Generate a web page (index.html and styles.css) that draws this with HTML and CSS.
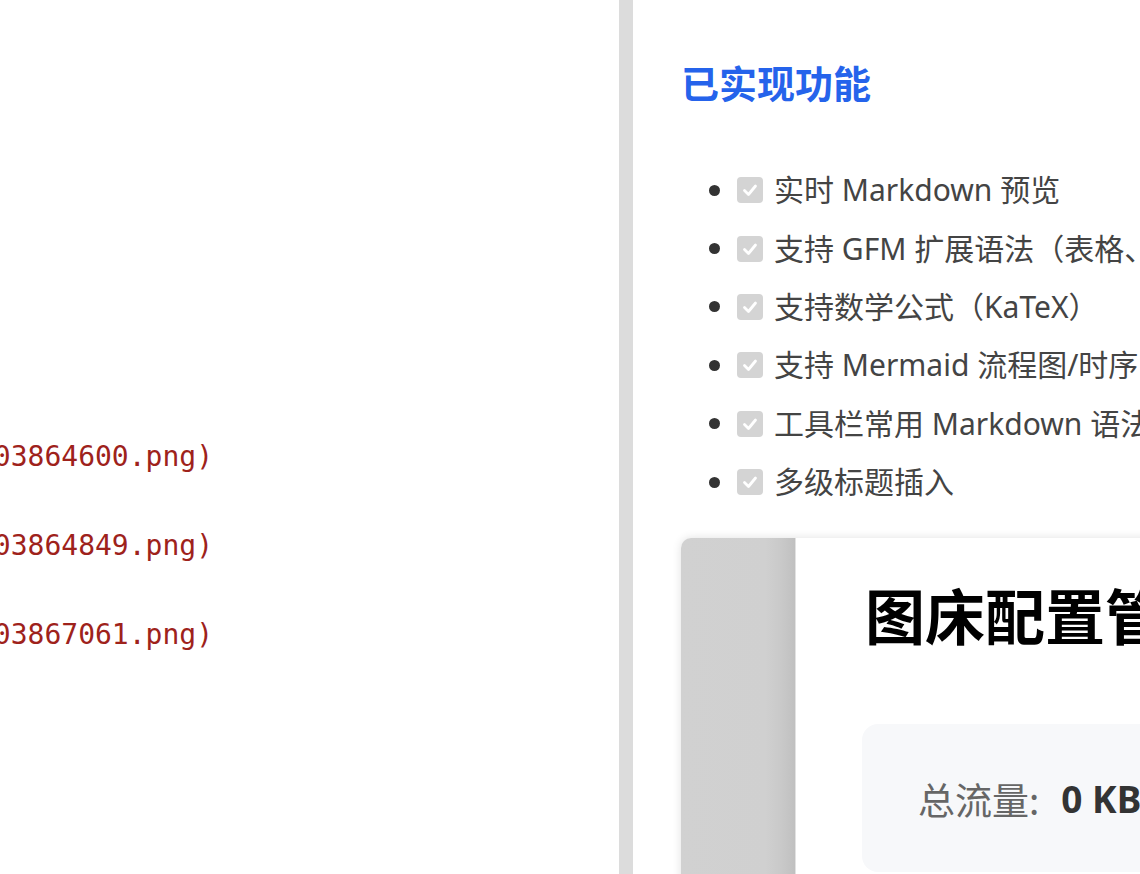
FILE: index.html
```html
<!DOCTYPE html>
<html lang="zh-CN">
<head>
<meta charset="utf-8">
<title>Markdown 编辑器</title>
<link rel="stylesheet" href="styles.css">
</head>
<body>
<div class="app">
  <div class="editor">
    <div class="code">
      <div class="code-line"><span>![image](https://img.example.com/upload/17038640003864600.png)</span></div>
      <div class="code-line"><span>![image](https://img.example.com/upload/17038640003864849.png)</span></div>
      <div class="code-line"><span>![image](https://img.example.com/upload/17038640003867061.png)</span></div>
    </div>
  </div>
  <div class="divider"></div>
  <div class="preview">
    <h2 class="title">已实现功能</h2>
    <ul class="tasks">
      <li class="task"><span class="dot"></span><span class="check"><svg viewBox="0 0 26 26" width="26" height="26"><path d="M7.5 13.5l4 4 7-8.5" fill="none" stroke="#fff" stroke-width="2.8" stroke-linecap="round" stroke-linejoin="round"/></svg></span><span class="label">实时 Markdown 预览</span></li>
      <li class="task"><span class="dot"></span><span class="check"><svg viewBox="0 0 26 26" width="26" height="26"><path d="M7.5 13.5l4 4 7-8.5" fill="none" stroke="#fff" stroke-width="2.8" stroke-linecap="round" stroke-linejoin="round"/></svg></span><span class="label">支持 GFM 扩展语法（表格、任务列表、删除线）</span></li>
      <li class="task"><span class="dot"></span><span class="check"><svg viewBox="0 0 26 26" width="26" height="26"><path d="M7.5 13.5l4 4 7-8.5" fill="none" stroke="#fff" stroke-width="2.8" stroke-linecap="round" stroke-linejoin="round"/></svg></span><span class="label">支持数学公式（KaTeX）</span></li>
      <li class="task"><span class="dot"></span><span class="check"><svg viewBox="0 0 26 26" width="26" height="26"><path d="M7.5 13.5l4 4 7-8.5" fill="none" stroke="#fff" stroke-width="2.8" stroke-linecap="round" stroke-linejoin="round"/></svg></span><span class="label">支持 Mermaid 流程图/时序图</span></li>
      <li class="task"><span class="dot"></span><span class="check"><svg viewBox="0 0 26 26" width="26" height="26"><path d="M7.5 13.5l4 4 7-8.5" fill="none" stroke="#fff" stroke-width="2.8" stroke-linecap="round" stroke-linejoin="round"/></svg></span><span class="label">工具栏常用 Markdown 语法</span></li>
      <li class="task"><span class="dot"></span><span class="check"><svg viewBox="0 0 26 26" width="26" height="26"><path d="M7.5 13.5l4 4 7-8.5" fill="none" stroke="#fff" stroke-width="2.8" stroke-linecap="round" stroke-linejoin="round"/></svg></span><span class="label">多级标题插入</span></li>
    </ul>
    <div class="shot">
      <div class="shot-side"></div>
      <div class="shot-main">
        <div class="shot-title">图床配置管理</div>
        <div class="shot-card"><span class="stat-label">总流量:</span><span class="stat-value">0 KB</span></div>
      </div>
    </div>
  </div>
</div>
</body>
</html>
```
FILE: styles.css
```css
html, body {
  margin: 0;
  padding: 0;
  background: #ffffff;
  overflow: hidden;
}

.app {
  display: flex;
  width: 1140px;
  height: 874px;
  overflow: hidden;
}

.editor {
  width: 619px;
  flex: none;
  background: #ffffff;
}

.code {
  width: 213px;
  padding-top: 412px;
  overflow: hidden;
}

.code-line {
  display: flex;
  justify-content: flex-end;
  white-space: nowrap;
  font-family: "DejaVu Sans Mono", "Liberation Mono", monospace;
  font-size: 28px;
  line-height: 89px;
  color: #9e221b;
}

.divider {
  width: 14px;
  flex: none;
  background: #dcdcdc;
}

.preview {
  flex: 1;
  min-width: 0;
  padding: 60px 0 0 48px;
  overflow: hidden;
  font-family: "Noto Sans", "Noto Sans CJK SC", sans-serif;
}

.title {
  margin: 0;
  font-family: "Noto Sans CJK SC", sans-serif;
  font-size: 38px;
  line-height: 44px;
  font-weight: 700;
  color: #2563eb;
}

.tasks {
  list-style: none;
  margin: 57px 0 0 0;
  padding: 0 0 0 28px;
}

.task {
  display: flex;
  align-items: center;
  height: 58.4px;
  white-space: nowrap;
  font-size: 30px;
  color: #444444;
}

.dot {
  width: 11px;
  height: 11px;
  border-radius: 50%;
  background: #333333;
  flex: none;
  margin-right: 17px;
}

.check {
  width: 26px;
  height: 26px;
  border-radius: 4px;
  background: #d4d4d4;
  flex: none;
  margin-right: 11px;
  display: flex;
}

.label {
  line-height: 1;
}

.shot {
  display: flex;
  margin-top: 27px;
  width: 700px;
  height: 400px;
  border-top-left-radius: 10px;
  overflow: hidden;
  background: #ffffff;
  box-shadow: 0 0 10px rgba(0, 0, 0, 0.12);
}

.shot-side {
  width: 114px;
  flex: none;
  background: linear-gradient(to right, #d1d1d1 0%, #d0d0d0 74%, #c9c9c9 88%, #c0c0c0 100%);
  border-right: 1px solid #e2e2e2;
}

.shot-main {
  flex: 1;
  padding: 40px 0 0 66px;
  font-family: "Noto Sans", "Noto Sans CJK SC", sans-serif;
}

.shot-title {
  font-family: "Noto Sans CJK SC", sans-serif;
  font-size: 60px;
  line-height: 72px;
  font-weight: 700;
  color: #000000;
  white-space: nowrap;
  padding-left: 3px;
}

.shot-card {
  display: flex;
  margin-top: 74px;
  height: 148px;
  box-sizing: border-box;
  padding: 50px 0 0 56px;
  border-radius: 16px;
  background: #f7f8fa;
  font-size: 37px;
  line-height: 50px;
  white-space: nowrap;
}

.stat-label {
  color: #666666;
  font-family: "Noto Sans CJK SC", sans-serif;
  margin-right: 22px;
}

.stat-value {
  color: #333333;
  font-weight: 700;
}
```
